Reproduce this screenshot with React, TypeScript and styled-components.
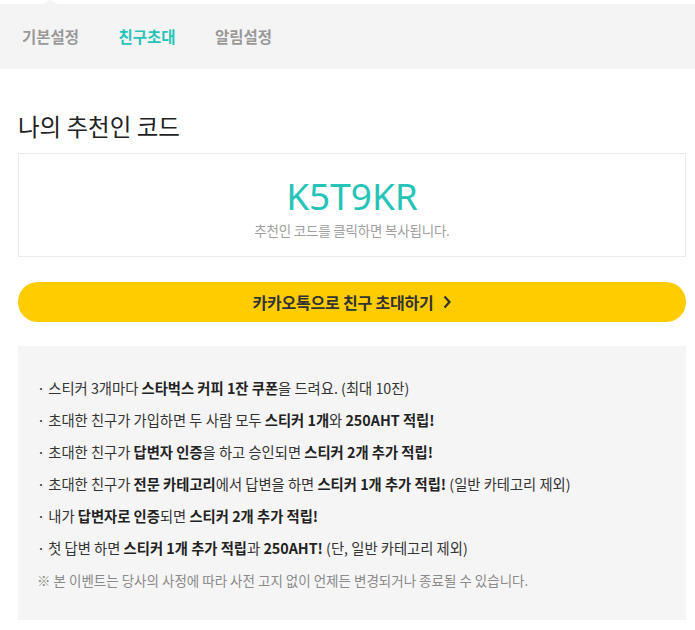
import styled, { createGlobalStyle } from 'styled-components';

const GlobalStyle = createGlobalStyle`
  html, body {
    margin: 0;
    padding: 0;
    background: #ffffff;
    font-family: 'Noto Sans CJK KR', 'Noto Sans', sans-serif;
    color: #333333;
  }
`;

const tabs = [
  { label: '기본설정', active: false },
  { label: '친구초대', active: true },
  { label: '알림설정', active: false },
];

const benefits: React.ReactNode[] = [
  <>스티커 3개마다 <b>스타벅스 커피 1잔 쿠폰</b>을 드려요. (최대 10잔)</>,
  <>초대한 친구가 가입하면 두 사람 모두 <b>스티커 1개</b>와 <b>250AHT 적립!</b></>,
  <>초대한 친구가 <b>답변자 인증</b>을 하고 승인되면 <b>스티커 2개 추가 적립!</b></>,
  <>초대한 친구가 <b>전문 카테고리</b>에서 답변을 하면 <b>스티커 1개 추가 적립!</b> (일반 카테고리 제외)</>,
  <>내가 <b>답변자로 인증</b>되면 <b>스티커 2개 추가 적립!</b></>,
  <>첫 답변 하면 <b>스티커 1개 추가 적립</b>과 <b>250AHT!</b> (단, 일반 카테고리 제외)</>,
];

const App = () => (
  <Page>
    <GlobalStyle />
    <TabBar>
      <Notch />
      {tabs.map((tab) => (
        <Tab key={tab.label} $active={tab.active}>
          {tab.label}
        </Tab>
      ))}
    </TabBar>
    <Content>
      <Heading>나의 추천인 코드</Heading>
      <CodeBox>
        <Code>K5T9KR</Code>
        <CodeHint>추천인 코드를 클릭하면 복사됩니다.</CodeHint>
      </CodeBox>
      <KakaoButton type="button">
        카카오톡으로 친구 초대하기
        <svg width="10" height="14" viewBox="0 0 10 14">
          <path d="M2.5 1.5 L7.5 7 L2.5 12.5" fill="none" stroke="#333" strokeWidth="2.2" />
        </svg>
      </KakaoButton>
      <InfoBox>
        {benefits.map((item, i) => (
          <InfoItem key={i}>· {item}</InfoItem>
        ))}
        <Notice>※ 본 이벤트는 당사의 사정에 따라 사전 고지 없이 언제든 변경되거나 종료될 수 있습니다.</Notice>
      </InfoBox>
    </Content>
  </Page>
);

const Page = styled.div`
  width: 695px;
  padding-top: 4px;
`;

const TabBar = styled.nav`
  position: relative;
  height: 65px;
  background: #f4f4f4;
  display: flex;
  align-items: center;
  gap: 39.5px;
  padding-left: 22px;
`;

// small arrow pointing up from the bar, toward whatever opened it
const Notch = styled.span`
  position: absolute;
  top: -4px;
  left: 43px;
  width: 0;
  height: 0;
  border-left: 7px solid transparent;
  border-right: 7px solid transparent;
  border-bottom: 4px solid #f4f4f4;
`;

const Tab = styled.span<{ $active: boolean }>`
  font-size: 15.5px;
  font-weight: 700;
  color: ${(p) => (p.$active ? '#26c4b8' : '#999999')};
  margin-top: -1px;
`;

const Content = styled.main`
  padding: 0 9px 0 18px;
`;

const Heading = styled.h2`
  margin: 41px 0 0;
  font-size: 23.5px;
  font-weight: 400;
  line-height: 32px;
  color: #222222;
`;

const CodeBox = styled.div`
  margin-top: 11px;
  height: 104px;
  box-sizing: border-box;
  border: 1px solid #ebebeb;
  display: flex;
  flex-direction: column;
  align-items: center;
  justify-content: center;
  cursor: pointer;
`;

const Code = styled.div`
  font-family: 'Noto Sans', sans-serif;
  font-size: 37px;
  line-height: 44px;
  color: #26c4b8;
  margin-top: 4px;
`;

const CodeHint = styled.div`
  font-size: 13.5px;
  line-height: 20px;
  color: #a0a0a0;
  margin-top: 2px;
  letter-spacing: -0.2px;
`;

const KakaoButton = styled.button`
  margin-top: 25px;
  width: 100%;
  height: 40px;
  border: none;
  border-radius: 20px;
  background: #ffcc00;
  font-family: inherit;
  font-size: 16px;
  font-weight: 700;
  color: #333333;
  display: flex;
  align-items: center;
  justify-content: center;
  gap: 8px;
  letter-spacing: -0.2px;
  cursor: pointer;
`;

const InfoBox = styled.div`
  margin-top: 24px;
  height: 274px;
  box-sizing: border-box;
  background: #f5f5f5;
  padding: 26px 20px 0 19px;
`;

const InfoItem = styled.p`
  margin: 0;
  font-size: 14.3px;
  line-height: 32px;
  color: #333333;

  b {
    font-weight: 700;
    color: #222222;
  }
`;

const Notice = styled.p`
  margin: 0;
  font-size: 13.5px;
  line-height: 32px;
  color: #8a8a8a;
`;

export default App;
